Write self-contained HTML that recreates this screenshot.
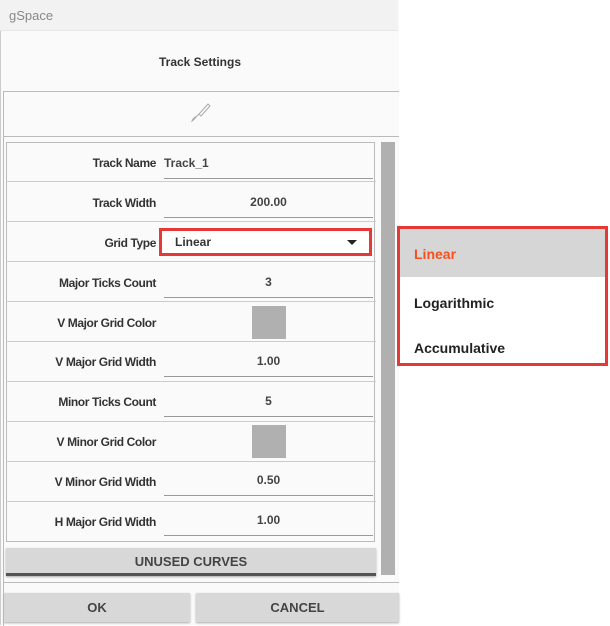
<!DOCTYPE html><html><head><style>
body{margin:0;width:610px;height:625px;background:#fff;font-family:"Liberation Sans",sans-serif;position:relative;overflow:hidden;color:#333}
.a{position:absolute}
.dlg{left:0;top:0;width:398px;height:625px;background:#fafafa;border-left:1px solid #ccc}
.tb{left:0;top:0;width:398px;height:31px;background:#f2f2f2;border-bottom:1px solid #e6e6e6;font-size:13px;color:#888;line-height:31px;padding-left:9px;box-sizing:border-box}
.lbl{font-size:12px;font-weight:bold;text-align:right;width:150px;left:6px;letter-spacing:-0.4px;color:#333}
.val{font-size:12px;font-weight:bold;left:164px;width:209px;border-bottom:1px solid #999;height:28px;text-align:center;line-height:26px;color:#444}
.row{left:6px;width:370px;height:40px;border-bottom:1px solid #ccc;box-sizing:border-box}
.btn{background:#d8d8d8;font-size:13px;font-weight:bold;text-align:center;color:#444;box-shadow:0 1px 2px #aaa}
</style></head><body>
<div class="a dlg"></div>
<div class="a tb">gSpace</div>
<div class="a" style="left:0;top:55px;width:400px;text-align:center;font-size:12px;font-weight:bold">Track Settings</div>
<div class="a" style="left:3px;top:91px;width:396px;border-top:1px solid #bbb"></div>
<div class="a" style="left:3px;top:91px;height:535px;border-left:1px solid #bbb"></div>
<svg class="a" style="left:190px;top:102px" width="24" height="22" viewBox="0 0 24 22"><path d="M18 2 L20 4 L11 14 L9 12 Z M9 12 L6 15 Q4 18 2 19 L3 17 Q5 15 7 14" fill="none" stroke="#aaa" stroke-width="1"/></svg>
<div class="a" style="left:3px;top:136px;width:396px;border-top:1px solid #bbb"></div>
<div class="a" style="left:6px;top:142px;width:369px;height:400px;border:1px solid #bbb;box-sizing:border-box"></div>
<div class="a" style="left:381px;top:142px;width:14px;height:433px;background:#b0b0b0"></div>
<div class="a row" style="top:142px"></div><div class="a row" style="top:182px"></div><div class="a row" style="top:222px"></div><div class="a row" style="top:262px"></div><div class="a row" style="top:302px"></div><div class="a row" style="top:342px"></div><div class="a row" style="top:382px"></div><div class="a row" style="top:422px"></div><div class="a row" style="top:462px"></div>
<div class="a lbl" style="top:156px">Track Name</div><div class="a val" style="top:150px;text-align:left">Track_1</div>
<div class="a lbl" style="top:196px">Track Width</div><div class="a val" style="top:189px">200.00</div>
<div class="a lbl" style="top:236px">Grid Type</div>
<div class="a" style="left:159px;top:228px;width:213px;height:28px;border:3px solid #e53935;box-sizing:border-box;background:#fff;font-size:12px;font-weight:bold;line-height:22px;padding-left:13px">Linear<span class="a" style="right:12px;top:9px;border-left:5px solid transparent;border-right:5px solid transparent;border-top:5px solid #222"></span></div>
<div class="a lbl" style="top:276px">Major Ticks Count</div><div class="a val" style="top:269px">3</div>
<div class="a lbl" style="top:316px">V Major Grid Color</div><div class="a" style="left:252px;top:306px;width:34px;height:33px;background:#b0b0b0"></div>
<div class="a lbl" style="top:355px">V Major Grid Width</div><div class="a val" style="top:348px">1.00</div>
<div class="a lbl" style="top:395px">Minor Ticks Count</div><div class="a val" style="top:388px">5</div>
<div class="a lbl" style="top:435px">V Minor Grid Color</div><div class="a" style="left:252px;top:425px;width:34px;height:33px;background:#b0b0b0"></div>
<div class="a lbl" style="top:475px">V Minor Grid Width</div><div class="a val" style="top:467px">0.50</div>
<div class="a lbl" style="top:515px">H Major Grid Width</div><div class="a val" style="top:507px">1.00</div>
<div class="a btn" style="left:6px;top:548px;width:370px;height:25px;line-height:27px;border-bottom:3px solid #555">UNUSED CURVES</div>
<div class="a" style="left:3px;top:582px;width:396px;border-top:1px solid #bbb"></div>
<div class="a btn" style="left:4px;top:593px;width:186px;height:29px;line-height:29px">OK</div>
<div class="a btn" style="left:196px;top:593px;width:203px;height:29px;line-height:29px">CANCEL</div>
<div class="a" style="left:397px;top:226px;width:211px;height:140px;border:3px solid #e53935;box-sizing:border-box;background:#fff">
<div style="background:#d6d6d6;height:48px;line-height:50px;padding-left:14px;color:#f4511e;font-size:14px;font-weight:bold">Linear</div>
<div style="height:48px;line-height:52px;padding-left:14px;font-size:14px;font-weight:bold;color:#222">Logarithmic</div>
<div style="line-height:46px;padding-left:14px;font-size:14px;font-weight:bold;color:#222">Accumulative</div>
</div>
</body></html>
